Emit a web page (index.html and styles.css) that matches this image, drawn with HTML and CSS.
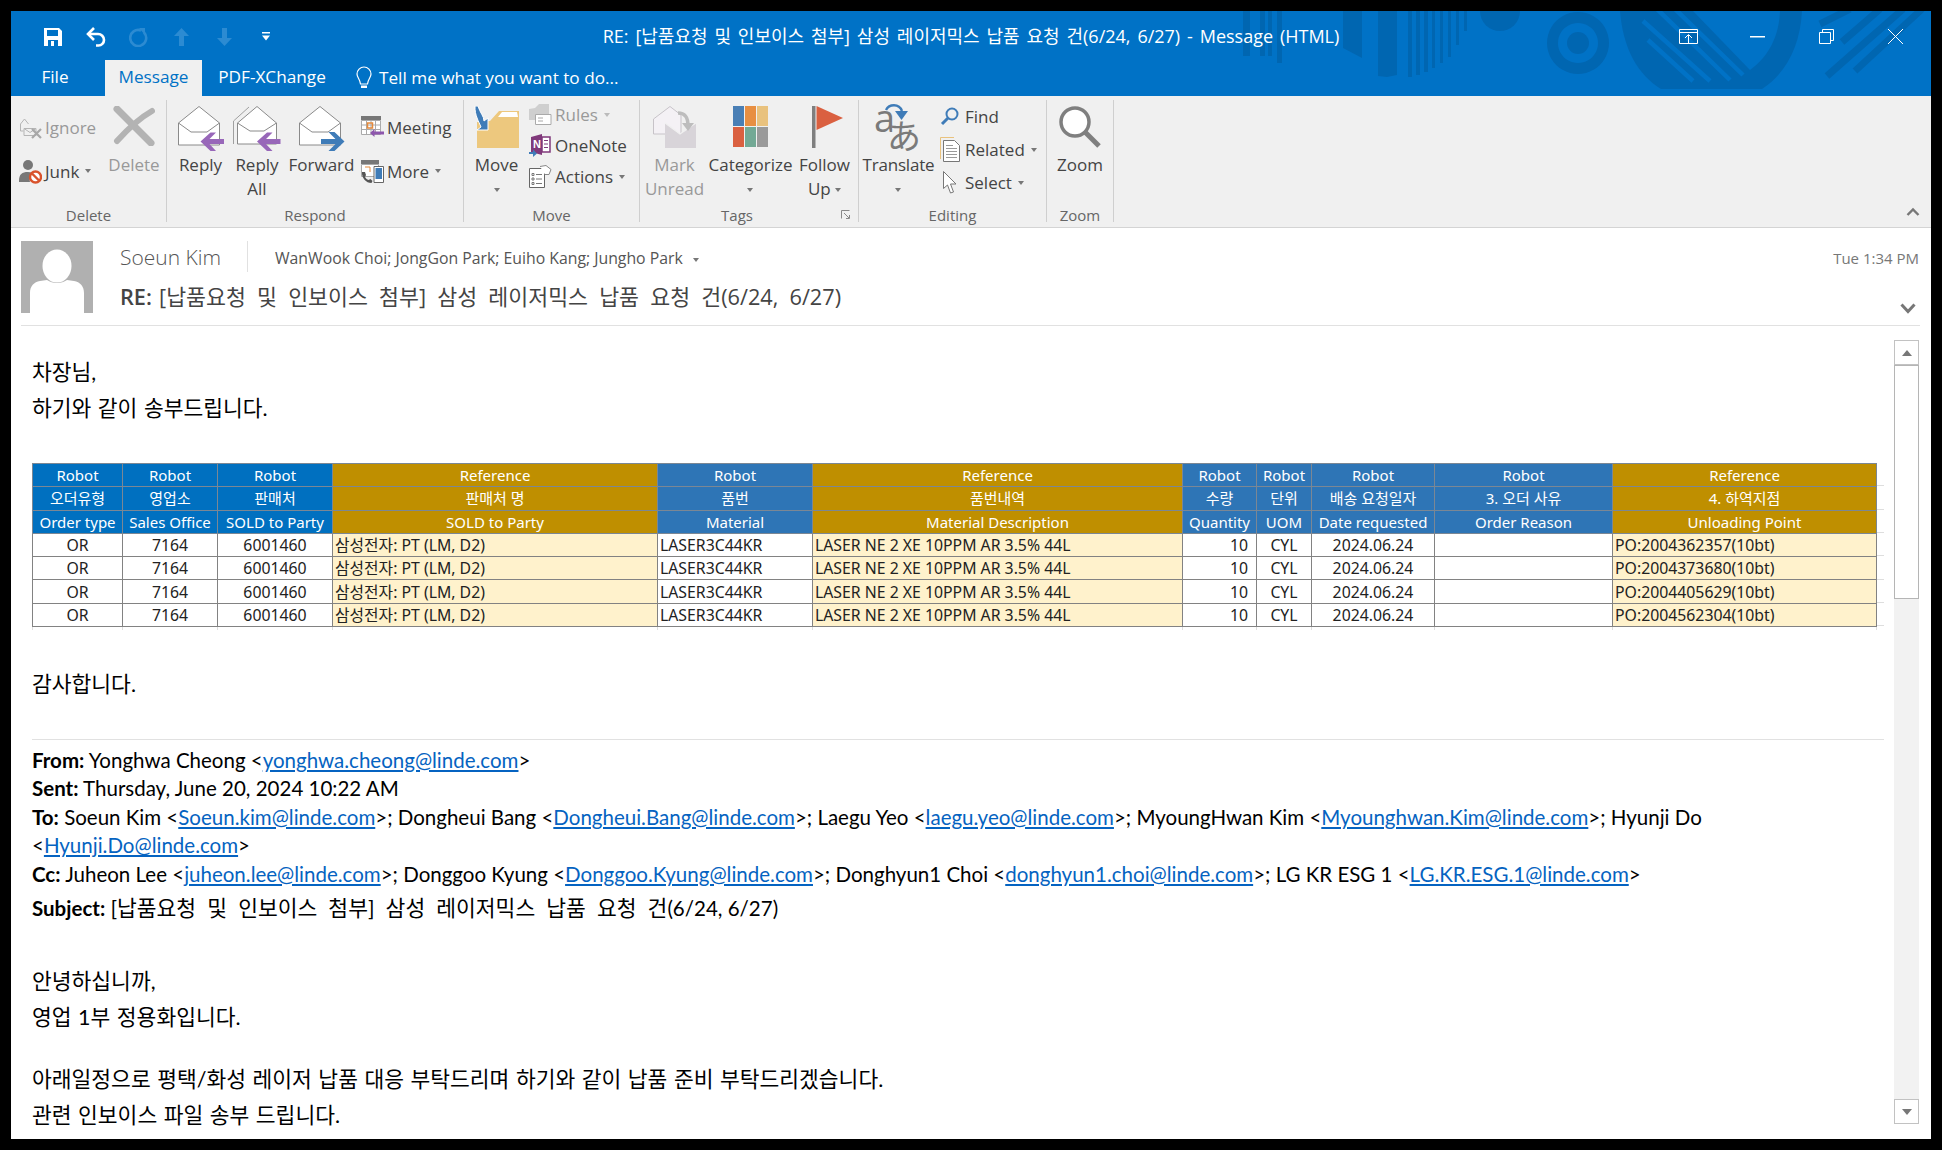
FILE: index.html
```html
<!DOCTYPE html>
<html lang="ko">
<head>
<meta charset="utf-8">
<title>Message</title>
<link rel="stylesheet" href="styles.css">
</head>
<body>
<div class="window">
  <svg class="pattern" viewBox="11 11 1920 85" width="1920" height="85" aria-hidden="true">
    <g fill="#0066b1">
      <path d="M1243 11h7v45h-7zM1260 11h5v45h-5zM1268 11h4v45h-4zM1277 11h5v52h-5zM1343 11h19v47l-19-10zM1378 11h19v64l-10 2-9-1zM1408 11h4v66h-4zM1416 11h4v64h-4zM1424 11h4v61h-4zM1432 11h3v57h-3zM1440 11h3v52h-3zM1448 11h3v46h-3zM1456 11h3v34h-3zM1464 11h3v20h-3z"/>
      <path d="M1480 11a20 20 0 0 0 40 0z"/>
      <path fill-rule="evenodd" d="M1578 12a31 31 0 1 0 .01 0zM1578 23a20 20 0 1 1-.01 0z"/>
      <circle cx="1578" cy="43" r="11"/>
      <path d="M1620 11c3 38 18 64 41 78h101c24-16 38-42 40-78z"/>
    </g>
    <path fill="#0072c6" d="M1693 11l57 59c19-14 29-34 30-59z"/>
    <g fill="none" stroke="#0072c6" stroke-width="4.500">
      <path d="M1657 9l73 71M1675 9l68 66M1643 21l67 60M1648 40l45 41"/>
    </g>
    <g fill="none" stroke="#0066b1" stroke-width="7">
      <path d="M1903 9l-76 67M1922 9l-67 62M1880 9l-38 33M1850 9l-30 15"/>
    </g>
  </svg>

  <header class="titlebar">
    <div class="qat">
      <span class="qat-btn"><svg width="20" height="20" viewBox="0 0 20 20"><path fill="#fff" d="M1 1h15l3 3v15H1z"/><path fill="#0072c6" d="M4 3h11v6H4zM5 13h10v6H5z"/><path fill="#fff" d="M8 14h3v5H8z"/></svg></span>
      <span class="qat-btn"><svg width="22" height="20" viewBox="0 0 22 20"><path fill="none" stroke="#fff" stroke-width="2.600" d="M3 7h10a6 6 0 0 1 6 6 5.500 5.500 0 0 1-5.500 5.500H11"/><path fill="none" stroke="#fff" stroke-width="2.600" d="M9 1L3 7l6 6"/></svg></span>
      <span class="qat-btn"><svg width="20" height="20" viewBox="0 0 20 20"><path fill="none" stroke="#2c8bd2" stroke-width="2.600" d="M12 3.500a8 8 0 1 0 3 2"/><path fill="#2c8bd2" d="M10 1h6v7z"/></svg></span>
      <span class="qat-btn"><svg width="15" height="18" viewBox="0 0 15 18"><path fill="#2c8bd2" d="M7.500 0L15 8h-5v10H5V8H0z"/></svg></span>
      <span class="qat-btn"><svg width="15" height="18" viewBox="0 0 15 18"><path fill="#2c8bd2" d="M7.500 18L15 10h-5V0H5v10H0z"/></svg></span>
      <span class="qat-btn qat-more"><svg width="8" height="9" viewBox="0 0 8 9"><path fill="#fff" d="M0 0h8v1.500H0zM0 3.500h8L4 8.500z"/></svg></span>
    </div>
    <div class="title">RE: [납품요청 및 인보이스 첨부] 삼성 레이저믹스 납품 요청 건(6/24, 6/27) - Message (HTML)</div>
    <div class="controls">
      <span class="ctl"><svg width="19" height="15" viewBox="0 0 19 15"><path fill="none" stroke="#fff" stroke-width="1" d="M.5.5h18v14H.5zM.5 3.500h18M9.500 14V6M6 9l3.500-3.500L13 9"/></svg></span>
      <span class="ctl"><svg width="15" height="2" viewBox="0 0 15 2"><path fill="#fff" d="M0 0h15v1.500H0z"/></svg></span>
      <span class="ctl"><svg width="15" height="15" viewBox="0 0 15 15"><path fill="none" stroke="#fff" d="M.5 3.500h11v11H.5zM3.500 3.500v-3h11v11h-3"/></svg></span>
      <span class="ctl"><svg width="15" height="15" viewBox="0 0 15 15"><path fill="none" stroke="#fff" d="M0 0l15 15M15 0L0 15"/></svg></span>
    </div>
  </header>

  <nav class="tabs">
    <span class="tab tab-file">File</span>
    <span class="tab tab-message">Message</span>
    <span class="tab tab-pdf">PDF-XChange</span>
    <span class="tab tab-tell">
      <svg width="18" height="26" viewBox="0 0 18 26"><path fill="none" stroke="#fff" stroke-width="1.200" d="M9 2a7 7 0 0 0-7 7c0 3.500 3 5 3.500 10h7C13 14 16 12.500 16 9a7 7 0 0 0-7-7z"/><path fill="#fff" d="M6 20.500h6V23H6z"/></svg>
      Tell me what you want to do...
    </span>
  </nav>

  <section class="ribbon">
    <div class="group g-delete">
      <div class="group-body">
        <div class="small-col col-2 col-ignore">
          <div class="small off"><svg class="ic" width="23" height="23" viewBox="0 0 23 23"><g fill="none" stroke="#b5b5b5"><path d="M1.500 8l4-5 4 5"/><path d="M1.500 8v7h3"/><path d="M5 12.500h12v7H5zM5 12.500l6 4 6-4"/></g><path stroke="#a8a8a8" stroke-width="2.200" d="M13 13l9 9M22 13l-9 9"/></svg><span>Ignore</span></div>
          <div class="small"><svg class="ic" width="23" height="25" viewBox="0 0 23 25"><circle cx="9" cy="6" r="5" fill="#777"/><path fill="#777" d="M0 22c0-7 3-9 9-9 3 0 5 1 6 2-3 2-5 4-4 8l-11 0z"/><circle cx="16.500" cy="18" r="5.500" fill="#fff" stroke="#d9532c" stroke-width="2.400"/><path stroke="#d9532c" stroke-width="2.400" d="M13 14.500l7 7"/></svg><span>Junk</span><i class="caret"></i></div>
        </div>
        <div class="big off w-delete">
          <span class="bigicon"><svg width="42" height="40" viewBox="0 0 42 40"><path fill="none" stroke="#b3b3b3" stroke-width="7" stroke-linecap="round" d="M4 3c10 10 24 24 34 34"/><path fill="none" stroke="#b3b3b3" stroke-width="6" stroke-linecap="round" d="M39 5C25 13 13 25 4 35"/></svg></span>
          <span class="lb">Delete</span>
        </div>
      </div>
      <div class="group-label">Delete</div>
    </div>

    <div class="group g-respond">
      <div class="group-body">
        <div class="big w-reply">
          <span class="bigicon"><svg width="46" height="46" viewBox="0 0 46 46"><path fill="#fff" stroke="#8a8a8a" d="M.5 17L21 .5 41.500 17v22H.5z"/><path fill="none" stroke="#8a8a8a" d="M.5 17L13 26h16l12.500-9"/><path fill="#9867b9" d="M22.500 35.500l10-9h5.500l-6.500 6.500H46v5H31.500l6.500 7h-5.500z"/></svg></span>
          <span class="lb">Reply</span>
        </div>
        <div class="big w-replyall">
          <span class="bigicon"><svg width="48" height="46" viewBox="0 0 48 46"><path fill="none" stroke="#a0a0a0" d="M.5 38V15L16 1"/><path fill="#fff" stroke="#8a8a8a" d="M4.500 17L24 .5 43.500 17v21h-39z"/><path fill="none" stroke="#8a8a8a" d="M4.500 17L17 25h14l12.500-8"/><path fill="#9867b9" d="M24 35.500l10-9h5.500l-6.500 6.500h14.500v5H33l6.500 7H34z"/></svg></span>
          <span class="lb">Reply<br>All</span>
        </div>
        <div class="big w-forward">
          <span class="bigicon"><svg width="46" height="46" viewBox="0 0 46 46"><path fill="#fff" stroke="#8a8a8a" d="M.5 17L21 .5 41.500 17v22H.5z"/><path fill="none" stroke="#8a8a8a" d="M.5 17L13 26h16l12.500-9"/><path fill="#3f7cb8" d="M45.500 35.500l-10 9.500h-6l7-7H22v-5h14.500l-7-7h6z"/></svg></span>
          <span class="lb">Forward</span>
        </div>
        <div class="small-col col-2 col-meeting">
          <div class="small"><svg class="ic" width="23" height="23" viewBox="0 0 23 23"><path fill="#777" d="M0 0h20v4H0z"/><path fill="#fff" stroke="#aaa" d="M.5 4.500h19v14H.5zM5.500 4.500v14M10 4.500v14M14.500 4.500v14M.5 9h19M.5 13.500h19"/><path fill="none" stroke="#e58a3c" stroke-width="1.500" d="M6.500 7h5v5h-5z"/><path fill="#8d56ac" d="M9 17l4.500-4v2.500H23v3h-9.500V21z"/></svg><span>Meeting</span></div>
          <div class="small"><svg class="ic" width="23" height="23" viewBox="0 0 23 23"><path fill="#777" d="M0 0h18v4H0z"/><path fill="#fff" stroke="#aaa" d="M.5 4.500h17v12H.5z"/><path fill="none" stroke="#e58a3c" d="M4 7h5v5"/><path fill="#555" d="M1 12l3 0 1 3-1 2c1 1.500 2 2.500 3.500 3l2-1 2 2-1 2c-5.500 0-10-5-9.500-11z"/><path fill="#fff" stroke="#666" d="M13 6.500h9.500v16H13z"/><path fill="#3f7cb8" d="M14.500 8h6.500v11h-6.500z"/></svg><span>More</span><i class="caret"></i></div>
        </div>
      </div>
      <div class="group-label">Respond</div>
    </div>

    <div class="group g-move">
      <div class="group-body">
        <div class="big w-move">
          <span class="bigicon"><svg width="45" height="42" viewBox="0 0 45 42"><path fill="#edc87e" d="M3 16l13-1L25 5h20v37H3z"/><path fill="#fff" d="M28 6h15l1 5H24z"/><path fill="#3f7cb8" stroke="#fff" d="M1 0h3c2 7 6 10 6 15l4-3v12H3l4-3C5 16 .5 9 1 0z"/></svg></span>
          <span class="lb">Move<br><i class="caret"></i></span>
        </div>
        <div class="small-col col-3 col-rules">
          <div class="small off"><svg class="ic" width="23" height="23" viewBox="0 0 23 23"><path fill="#cfcfcf" d="M0 6l6-1 4-4h10v16H0z"/><path fill="#fff" stroke="#aaa" d="M6.500 11.500h15.500v10H6.500z"/><path stroke="#aaa" d="M9 15h5M9 18h5"/></svg><span>Rules</span><i class="caret light"></i></div>
          <div class="small"><svg class="ic" width="23" height="23" viewBox="0 0 23 23"><path fill="#80397b" d="M2 3l11-3v21L2 18z"/><path fill="#fff" stroke="#80397b" stroke-width="1.500" d="M13 3h8v15h-8z"/><path stroke="#80397b" d="M15 6.500h4M15 10h4M15 13.500h4"/><text x="4" y="14" class="onenote-n">N</text><path fill="#3f7cb8" d="M0 18h4v-2.500l4 4-4 3.500v-3H0z"/></svg><span>OneNote</span></div>
          <div class="small"><svg class="ic" width="23" height="23" viewBox="0 0 23 23"><path fill="#fff" stroke="#666" d="M.5 3.500h15v19H.5z"/><path fill="none" stroke="#777" d="M3 8.500h2v2H3zM3 13h2v2H3zM3 17.500h2v2H3zM7 9.500h6M7 14h6M7 18.500h6"/><path fill="#fff" stroke="#888" d="M11 1.500l6-1 5 4-2 5h-4"/></svg><span>Actions</span><i class="caret"></i></div>
        </div>
      </div>
      <div class="group-label">Move</div>
    </div>

    <div class="group g-tags">
      <div class="group-body">
        <div class="big off w-mark">
          <span class="bigicon"><svg width="44" height="42" viewBox="0 0 44 42"><path fill="#f4f1f5" stroke="#c7c3c8" d="M.5 13L17 .5 28 9v19H.5z"/><path fill="#d8d4d9" d="M12 17l15 11 16-11v25H12z"/><path fill="none" stroke="#f0f0f0" stroke-width="1.200" d="M12 17l15 11 16-11"/><path fill="none" stroke="#bdbdbd" stroke-width="3.500" d="M25 7c7 0 10 4 10 13"/><path fill="#bdbdbd" d="M29 17h12l-6 8z"/></svg></span>
          <span class="lb">Mark<br>Unread</span>
        </div>
        <div class="big w-cat">
          <span class="bigicon cat-icon"><svg width="35" height="42" viewBox="0 0 35 42"><path fill="#4a7fb5" d="M0 0h11v20H0z"/><path fill="#e88f42" d="M12 0h11v20H12z"/><path fill="#e9c27e" d="M24 0h11v20H24z"/><path fill="#da6040" d="M0 21h11v20H0z"/><path fill="#73a995" d="M12 21h11v20H12z"/><path fill="#9a9a9a" d="M24 21h11v20H24z"/></svg></span>
          <span class="lb">Categorize<br><i class="caret"></i></span>
        </div>
        <div class="big w-follow">
          <span class="bigicon flag-icon"><svg width="31" height="42" viewBox="0 0 31 42"><path fill="#7f7f7f" d="M0 0h3.500v42H0z"/><path fill="#da6040" d="M4.500 0L31 12 4.500 24z"/></svg></span>
          <span class="lb">Follow<br>Up <i class="caret"></i></span>
        </div>
      </div>
      <div class="group-label label-tags">Tags<svg class="launcher" width="9" height="9" viewBox="0 0 9 9"><path fill="none" stroke="#888" d="M.5 8.500v-8h8M3 3l5 5M8.500 5v3.500H5"/></svg></div>
    </div>

    <div class="group g-editing">
      <div class="group-body">
        <div class="big w-translate">
          <span class="bigicon"><svg class="tr-svg" width="50" height="50" viewBox="0 0 50 50"><text x="0" y="30" class="tr-a">a<tspan class="tr-b" dx="-8" dy="17">あ</tspan></text><path fill="none" stroke="#3f7cb8" stroke-width="2.400" d="M12 8c3-6 13-7 16 1"/><path fill="#3f7cb8" d="M21 9h13l-6.500 9z"/></svg></span>
          <span class="lb">Translate<br><i class="caret"></i></span>
        </div>
        <div class="small-col col-edit">
          <div class="small"><svg class="ic" width="20" height="20" viewBox="0 0 20 20"><circle cx="12" cy="7" r="5.500" fill="none" stroke="#3f7cb8" stroke-width="2"/><path stroke="#3f7cb8" stroke-width="3" d="M8 11l-6 6"/></svg><span>Find</span></div>
          <div class="small"><svg class="ic" width="20" height="25" viewBox="0 0 20 25"><path fill="none" stroke="#e9c27e" d="M.500 22V.5H14"/><path fill="#fff" stroke="#777" d="M3.500 3.500h11l5 5v16h-16z"/><path stroke="#999" d="M6 8.500h7M6 11.500h11M6 14.500h11M6 17.500h11M6 20.500h11"/></svg><span>Related</span><i class="caret"></i></div>
          <div class="small"><svg class="ic" width="20" height="23" viewBox="0 0 20 23"><path fill="#fff" stroke="#777" d="M3.500.5v17l4-3.500 3 8 3-1-3-8h5.500z"/></svg><span>Select</span><i class="caret"></i></div>
        </div>
      </div>
      <div class="group-label">Editing</div>
    </div>

    <div class="group g-zoom">
      <div class="group-body">
        <div class="big w-zoom">
          <span class="bigicon"><svg width="42" height="42" viewBox="0 0 42 42"><circle cx="16" cy="16" r="14" fill="#fff" stroke="#7f7f7f" stroke-width="3.500"/><path stroke="#7f7f7f" stroke-width="5" d="M26 26l14 14"/></svg></span>
          <span class="lb">Zoom</span>
        </div>
      </div>
      <div class="group-label">Zoom</div>
    </div>

    <svg class="collapse" width="14" height="9" viewBox="0 0 14 9"><path fill="none" stroke="#777" stroke-width="2.400" d="M1.500 8L7 2.500 12.500 8"/></svg>
  </section>

  <section class="msg-head">
    <svg class="avatar" width="72" height="72" viewBox="0 0 72 72"><path fill="#b0b0b0" d="M0 0h72v72H0z"/><ellipse cx="36" cy="25" rx="14.500" ry="16.500" fill="#fff"/><path fill="#fff" d="M9 72V52c0-7 4-11 10-12l7-1c3 2 6 3 10 3s7-1 10-3l7 1c6 1 10 5 10 12v20z"/></svg>
    <div class="head-main">
      <div class="head-top">
        <span class="sender">Soeun Kim</span>
        <span class="recipients">WanWook Choi; JongGon Park; Euiho Kang; Jungho Park <i class="caret"></i></span>
        <span class="time">Tue 1:34 PM</span>
      </div>
      <div class="head-sub">
        <div class="subject"><b>RE: </b>[납품요청 및 인보이스 첨부] 삼성 레이저믹스 납품 요청 건(6/24, 6/27)</div>
        <svg class="expand" width="16" height="11" viewBox="0 0 16 11"><path fill="none" stroke="#777" stroke-width="3" d="M1.500 1.500L8 8.500l6.500-7"/></svg>
      </div>
    </div>
  </section>

  <main class="reading">
    <article class="content">
      <p class="ko">차장님,</p>
      <p class="ko">하기와 같이 송부드립니다.</p>

      <div class="table-wrap">
        <table class="orders">
          <colgroup>
            <col class="c1"><col class="c2"><col class="c3"><col class="c4"><col class="c5"><col class="c6"><col class="c7"><col class="c8"><col class="c9"><col class="c10"><col class="c11">
          </colgroup>
          <thead>
            <tr>
              <th class="b1">Robot</th><th class="b1">Robot</th><th class="b1">Robot</th><th class="g">Reference</th><th class="b2">Robot</th><th class="g">Reference</th><th class="b2">Robot</th><th class="b2">Robot</th><th class="b2">Robot</th><th class="b2">Robot</th><th class="g">Reference</th>
            </tr>
            <tr>
              <th class="b1">오더유형</th><th class="b1">영업소</th><th class="b1">판매처</th><th class="g">판매처 명</th><th class="b2">품번</th><th class="g">품번내역</th><th class="b2">수량</th><th class="b2">단위</th><th class="b2">배송 요청일자</th><th class="b2">3. 오더 사유</th><th class="g">4. 하역지점</th>
            </tr>
            <tr>
              <th class="b1">Order type</th><th class="b1">Sales Office</th><th class="b1">SOLD to Party</th><th class="g">SOLD to Party</th><th class="b2">Material</th><th class="g">Material Description</th><th class="b2">Quantity</th><th class="b2">UOM</th><th class="b2">Date requested</th><th class="b2">Order Reason</th><th class="g">Unloading Point</th>
            </tr>
          </thead>
          <tbody>
            <tr><td class="c">OR</td><td class="c">7164</td><td class="c">6001460</td><td class="y">삼성전자: PT (LM, D2)</td><td>LASER3C44KR</td><td class="y">LASER NE 2 XE 10PPM AR 3.5% 44L</td><td class="r">10</td><td class="c">CYL</td><td class="c">2024.06.24</td><td></td><td class="y">PO:2004362357(10bt)</td></tr>
            <tr><td class="c">OR</td><td class="c">7164</td><td class="c">6001460</td><td class="y">삼성전자: PT (LM, D2)</td><td>LASER3C44KR</td><td class="y">LASER NE 2 XE 10PPM AR 3.5% 44L</td><td class="r">10</td><td class="c">CYL</td><td class="c">2024.06.24</td><td></td><td class="y">PO:2004373680(10bt)</td></tr>
            <tr><td class="c">OR</td><td class="c">7164</td><td class="c">6001460</td><td class="y">삼성전자: PT (LM, D2)</td><td>LASER3C44KR</td><td class="y">LASER NE 2 XE 10PPM AR 3.5% 44L</td><td class="r">10</td><td class="c">CYL</td><td class="c">2024.06.24</td><td></td><td class="y">PO:2004405629(10bt)</td></tr>
            <tr><td class="c">OR</td><td class="c">7164</td><td class="c">6001460</td><td class="y">삼성전자: PT (LM, D2)</td><td>LASER3C44KR</td><td class="y">LASER NE 2 XE 10PPM AR 3.5% 44L</td><td class="r">10</td><td class="c">CYL</td><td class="c">2024.06.24</td><td></td><td class="y">PO:2004562304(10bt)</td></tr>
            <tr class="ticks"><td></td><td></td><td></td><td></td><td></td><td></td><td></td><td></td><td></td><td></td><td></td></tr>
          </tbody>
        </table>
        <div class="table-tail"></div>
      </div>

      <p class="ko thanks">감사합니다.</p>

      <div class="quoted">
        <div><b>From:</b> Yonghwa Cheong &lt;<a href="#">yonghwa.cheong@linde.com</a>&gt;</div>
        <div><b>Sent:</b> Thursday, June 20, 2024 10:22 AM</div>
        <div><b>To:</b> Soeun Kim &lt;<a href="#">Soeun.kim@linde.com</a>&gt;; Dongheui Bang &lt;<a href="#">Dongheui.Bang@linde.com</a>&gt;; Laegu Yeo &lt;<a href="#">laegu.yeo@linde.com</a>&gt;; MyoungHwan Kim &lt;<a href="#">Myounghwan.Kim@linde.com</a>&gt;; Hyunji Do<br>&lt;<a href="#">Hyunji.Do@linde.com</a>&gt;</div>
        <div><b>Cc:</b> Juheon Lee &lt;<a href="#">juheon.lee@linde.com</a>&gt;; Donggoo Kyung &lt;<a href="#">Donggoo.Kyung@linde.com</a>&gt;; Donghyun1 Choi &lt;<a href="#">donghyun1.choi@linde.com</a>&gt;; LG KR ESG 1 &lt;<a href="#">LG.KR.ESG.1@linde.com</a>&gt;</div>
        <div class="q-subject"><b>Subject:</b> <span class="q-ko">[납품요청 및 인보이스 첨부] 삼성 레이저믹스 납품 요청 건</span>(6/24, 6/27)</div>
      </div>

      <p class="ko greet">안녕하십니까,</p>
      <p class="ko">영업 1부 정용화입니다.</p>
      <p class="ko gap">아래일정으로 평택/화성 레이저 납품 대응 부탁드리며 하기와 같이 납품 준비 부탁드리겠습니다.</p>
      <p class="ko">관련 인보이스 파일 송부 드립니다.</p>
    </article>

    <aside class="scrollbar">
      <div class="sb-btn sb-up"><i class="tri-up"></i></div>
      <div class="sb-thumb"></div>
      <div class="sb-track"></div>
      <div class="sb-btn sb-down"><i class="tri-down"></i></div>
    </aside>
  </main>
</div>
</body>
</html>
```

FILE: styles.css
```css
* { box-sizing: border-box; }
html, body { margin: 0; height: 100%; }
body {
  background: #000;
  padding: 11px;
  overflow: hidden;
  font-family: "Open Sans", "Noto Sans CJK KR", sans-serif;
}
.window {
  position: relative;
  width: 1920px;
  height: 1128px;
  background: #fff;
  display: flex;
  flex-direction: column;
  overflow: hidden;
}
.window::before {
  content: "";
  position: absolute;
  left: 0; top: 0; right: 0;
  height: 85px;
  background: #0072c6;
}
.window > * { position: relative; }
.window > .pattern { position: absolute; left: 0; top: 0; }

/* title bar */
.titlebar {
  height: 49px;
  display: grid;
  grid-template-columns: 1fr auto 1fr;
  align-items: center;
  color: #fff;
}
.qat { display: flex; padding-left: 20px; height: 49px; padding-top: 2px; }
.qat-btn { width: 43px; display: flex; align-items: center; justify-content: center; }
.qat-more { width: 40px; }
.title { font-size: 18px; word-spacing: 2.200px; white-space: nowrap; padding-bottom: 2px; }
.controls { display: flex; justify-content: flex-end; padding-right: 1px; padding-top: 2px; }
.ctl { width: 69px; display: flex; align-items: center; justify-content: center; height: 30px; }

/* tabs */
.tabs { height: 36px; display: flex; padding-left: 20px; color: #fff; font-size: 17.200px; line-height: 34px; }
.tab { display: block; text-align: center; }
.tab-file { width: 48px; margin-right: 26px; }
.tab-message { width: 97px; background: #f0f0f0; color: #0072c6; }
.tab-pdf { width: 140px; }
.tab-tell { display: flex; align-items: center; margin-left: 13px; gap: 6px; }

/* ribbon */
.ribbon {
  height: 132px;
  background: #f0f0f0;
  border-bottom: 1px solid #d4d4d4;
  padding: 4px 0 5px;
  display: flex;
  color: #444;
  font-size: 17px;
}
.group {
  height: 122px;
  border-right: 1px solid #cfcfcf;
  display: flex;
  flex-direction: column;
}
.group-body { height: 108px; display: flex; }
.group-label {
  position: relative;
  height: 14px;
  line-height: 14px;
  text-align: center;
  font-size: 15px;
  color: #666;
}
.label-tags { padding-right: 24px; }
.launcher { position: absolute; right: 8px; top: 2px; }
.g-delete { width: 156px; }
.g-delete .group-body { padding-left: 8px; }
.g-respond { width: 297px; }
.g-respond .group-body { padding-left: 7px; }
.g-move { width: 176px; }
.g-move .group-body { padding-left: 4px; }
.g-tags { width: 219px; }
.g-tags .group-body { padding-left: 3px; }
.g-editing { width: 188px; }
.g-editing .group-body { padding-left: 2px; }
.g-zoom { width: 67px; }

.big {
  display: flex;
  flex-direction: column;
  align-items: center;
  text-align: center;
  line-height: 23.500px;
}
.bigicon {
  height: 50px;
  margin-top: 2px;
  display: flex;
  align-items: flex-start;
  justify-content: center;
  padding-top: 4px;
}
.cat-icon { margin-right: 1px; }
.flag-icon { margin-left: 6px; }
.lb { display: block; white-space: nowrap; margin-top: 1px; }
.off { color: #999; }
.w-delete { width: 50px; }
.w-reply { width: 53px; }
.w-replyall { width: 60px; }
.w-forward { width: 69px; }
.w-move { width: 57px; }
.w-mark { width: 63px; }
.w-cat { width: 89px; }
.w-follow { width: 59px; }
.w-translate { width: 75px; letter-spacing: -0.2px; }
.w-translate .bigicon { padding-top: 0; }
.w-zoom { width: 66px; }

.small-col { display: flex; flex-direction: column; }
.small { display: flex; align-items: center; white-space: nowrap; }
.ic { flex: none; }
.small > span { margin-left: 3px; }
.col-2 { padding-top: 5px; }
.col-2 .small { height: 44px; }
.col-3 { margin-left: 4px; margin-top: -1px; }
.col-3 .small { height: 31px; }
.col-edit { margin-left: 4px; }
.col-edit .small { height: 33px; }
.col-edit .ic { margin-right: 2px; }
.col-ignore { width: 90px; }
.col-meeting { margin-left: 5px; }
.caret {
  display: inline-block;
  width: 0;
  height: 0;
  margin-left: 6px;
  border-left: 3.500px solid transparent;
  border-right: 3.500px solid transparent;
  border-top: 4px solid #777;
  vertical-align: middle;
}
.big .lb > .caret:first-of-type { margin-left: 0; }
.w-follow .lb > .caret { margin-left: 3px; }
.caret.light { border-top-color: #bbb; }
.window .collapse { position: absolute; right: 11px; top: 111px; }
.onenote-n { font: 700 11px "Liberation Sans", sans-serif; fill: #fff; }
.tr-svg { overflow: visible; }
.tr-a { font: 400 38px "Open Sans", sans-serif; fill: #7a7a7a; }
.tr-b { font: 400 34px "Noto Sans CJK JP", sans-serif; fill: #7a7a7a; }

/* message header */
.msg-head {
  height: 98px;
  margin: 0 11px 0 10px;
  padding-top: 13px;
  display: flex;
  border-bottom: 1px solid #e1e1e1;
}
.avatar { flex: none; }
.head-main { flex: 1; margin-left: 27px; }
.head-top { height: 31px; display: flex; align-items: center; padding-right: 1px; }
.sender { font-size: 21px; font-weight: 300; color: #555; width: 128px; height: 31px; line-height: 33px; border-right: 1px solid #e1e1e1; }
.recipients { margin-left: 27px; padding-top: 3px; font-size: 15.800px; color: #555; flex: 1; }
.time { font-size: 15px; color: #777; padding-top: 3px; }
.head-sub { display: flex; justify-content: space-between; margin-top: 11px; padding-right: 4px; }
.subject { font-size: 21.700px; word-spacing: 5.500px; line-height: 28px; color: #444; }
.subject b { font-weight: 600; word-spacing: 1.500px; }
.expand { margin-top: 20px; }

/* body */
.reading { flex: 1; display: flex; min-height: 0; }
.content {
  flex: none;
  width: 1883px;
  padding: 28px 0 0 21px;
  font-family: "Lato", "Noto Sans CJK KR", sans-serif;
  font-size: 20.500px;
  color: #000;
  overflow: hidden;
}
.ko { margin: 0; height: 36px; line-height: 36px; font-size: 21.500px; word-spacing: 1px; }
.thanks { margin-top: 36px; }
.table-wrap { display: flex; align-items: flex-start; margin-top: 37px; width: 1852px; }
.orders {
  width: 1845px;
  table-layout: fixed;
  border-collapse: collapse;
  font-family: "Noto Sans", "Noto Sans CJK KR", sans-serif;
  font-size: 15.800px;
  line-height: 20px;
  color: #222;
}
.orders th, .orders td {
  height: 23.300px;
  padding: 0 2px;
  border: 1.500px solid #828282;
  font-weight: 400;
  white-space: nowrap;
  overflow: hidden;
}
.orders th { color: #fff; text-align: center; font-size: 15px; border-color: #7b8794; }
.orders .b1 { background: #0070c0; }
.orders .b2 { background: #2e75b6; }
.orders .g { background: #bf8f00; }
.orders .y { background: #fff2cc; }
.orders .c { text-align: center; }
.orders .r { text-align: right; padding-right: 8px; }
.orders .ticks td { height: 3px; line-height: 0; font-size: 0; border-width: 0 1px; border-color: #dedede; background: #fff; }
.c1 { width: 90px; }
.c2 { width: 95px; }
.c3 { width: 115px; }
.c4 { width: 325px; }
.c5 { width: 155px; }
.c6 { width: 370px; }
.c7 { width: 74px; }
.c8 { width: 55px; }
.c9 { width: 123px; }
.c10 { width: 178px; }
.c11 { width: 264px; }
.table-tail {
  flex: none;
  width: 7px;
  height: 163px;
  background: repeating-linear-gradient(to bottom, transparent 0, transparent 22.300px, #dedede 22.300px, #dedede 23.300px);
}
.quoted {
  margin-top: 37px;
  border-top: 1px solid #e1e1e1;
  padding-top: 6px;
  width: 1852px;
  line-height: 28.500px;
  white-space: nowrap;
}
.quoted b { font-weight: 700; }
.quoted a { color: #0563c1; text-decoration: underline; }
.q-subject { line-height: 41px; }
.q-ko { font-size: 21.500px; word-spacing: 5.600px; }
.greet { margin-top: 34px; }
.gap { margin-top: 26px; }

/* scrollbar */
.scrollbar {
  flex: none;
  width: 25px;
  height: 784px;
  margin: 14px 0 0 0;
  display: flex;
  flex-direction: column;
  background: #f2f2f2;
}
.sb-btn { height: 25px; border: 1px solid #c2c2c2; background: #fff; display: flex; align-items: center; justify-content: center; }
.sb-thumb { height: 234px; border: 1px solid #b5b5b5; background: #fff; }
.sb-track { flex: 1; }
.tri-up { width: 0; height: 0; border-left: 5.500px solid transparent; border-right: 5.500px solid transparent; border-bottom: 6px solid #777; }
.tri-down { width: 0; height: 0; border-left: 5.500px solid transparent; border-right: 5.500px solid transparent; border-top: 6px solid #777; }
```
